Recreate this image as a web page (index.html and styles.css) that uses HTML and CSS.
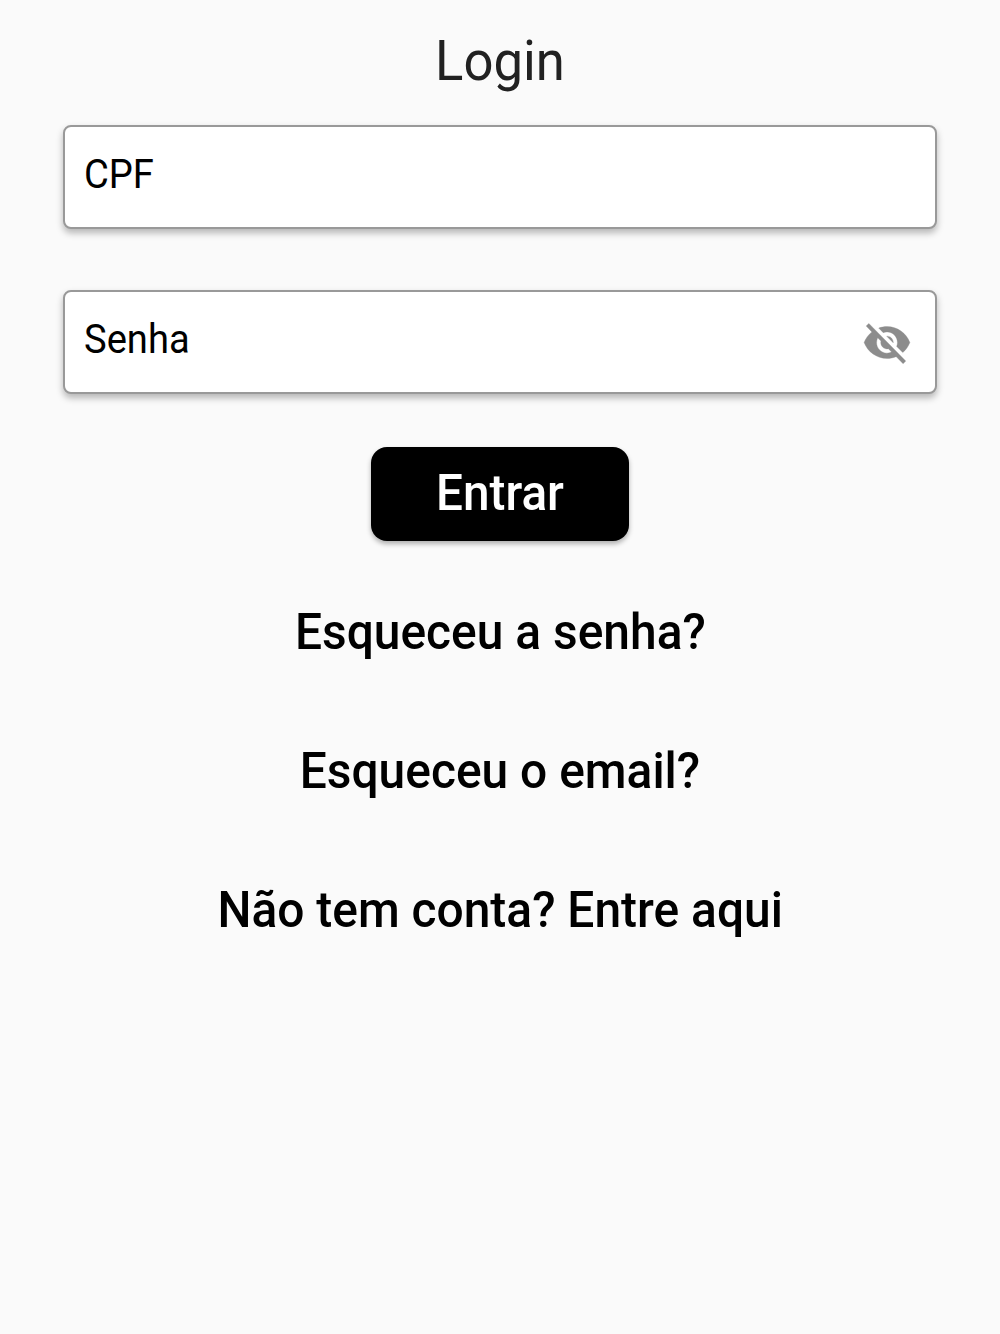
FILE: index.html
```html
<!DOCTYPE html>
<html lang="pt-BR">
<head>
    <meta charset="UTF-8">
    <meta name="viewport" content="width=device-width, initial-scale=1.0">
    <title>Login</title>
    <link rel="stylesheet" href="styles.css">
</head>
<body>
    <main class="container">
        <h1>Login</h1>
        <form class="login-form">
            <div class="field">
                <label for="cpf"><span class="label-text">CPF</span></label>
                <input type="text" id="cpf" name="cpf">
            </div>
            <div class="field">
                <label for="senha"><span class="label-text">Senha</span></label>
                <input type="password" id="senha" name="senha">
                <svg class="eye-icon" viewBox="0 0 24 24" preserveAspectRatio="none">
                    <path d="M12 7c2.76 0 5 2.24 5 5 0 .65-.13 1.26-.36 1.83l2.92 2.92c1.51-1.26 2.7-2.89 3.43-4.75-1.73-4.39-6-7.5-11-7.5-1.4 0-2.74.25-3.98.7l2.16 2.16C10.74 7.13 11.35 7 12 7zM2 4.27l2.28 2.28.46.46C3.08 8.3 1.78 10.02 1 12c1.73 4.39 6 7.5 11 7.5 1.55 0 3.03-.3 4.38-.84l.42.42L19.73 22 21 20.73 3.27 3 2 4.27zM7.53 9.8l1.55 1.55c-.05.21-.08.43-.08.65 0 1.66 1.34 3 3 3 .22 0 .44-.03.65-.08l1.55 1.55c-.67.33-1.41.53-2.2.53-2.76 0-5-2.24-5-5 0-.79.2-1.53.53-2.2zm4.31-.78l3.15 3.15.02-.16c0-1.66-1.34-3-3-3l-.17.01z"/>
                </svg>
            </div>
            <button type="submit"><span class="label-text">Entrar</span></button>
        </form>
        <nav class="links">
            <a href="#">Esqueceu a senha?</a>
            <a href="#">Esqueceu o email?</a>
            <a href="#">Não tem conta? Entre aqui</a>
        </nav>
    </main>
</body>
</html>
```
FILE: styles.css
```css
* {
    box-sizing: border-box;
}

body {
    font-family: Roboto, sans-serif;
    background-color: #fafafa;
    color: #000;
    margin: 0;
    padding: 0;
}

.container {
    min-height: 100vh;
    padding: 29px 63px 0;
}

h1 {
    margin: 0 0 32px;
    color: #212121;
    font-size: 55px;
    font-weight: 400;
    line-height: 64px;
    text-align: center;
    transform: scaleX(0.957);
}

.field {
    display: flex;
    align-items: center;
    height: 104px;
    margin-bottom: 61px;
    padding: 0 23px 0 19px;
    background-color: #fff;
    border: 2px solid #999;
    border-radius: 8px;
    box-shadow: 0 4px 7px rgba(0, 0, 0, 0.28);
}

label {
    font-size: 40px;
    line-height: 48px;
    padding-bottom: 4px;
}

.label-text {
    display: inline-block;
    transform: scaleX(0.953);
    transform-origin: left;
}

input {
    flex: 1;
    min-width: 0;
    border: none;
    outline: none;
    background: transparent;
    font: inherit;
    font-size: 40px;
}

.eye-icon {
    width: 50px;
    height: 51px;
    fill: #8c8c8c;
    stroke: #8c8c8c;
    stroke-width: 0.15;
}

button {
    display: block;
    width: 258px;
    height: 94px;
    margin: -8px auto 0;
    padding: 0;
    border: none;
    border-radius: 16px;
    background-color: #000;
    color: #fff;
    font: 500 50px/92px Roboto, sans-serif;
    box-shadow: 0 3px 5px rgba(0, 0, 0, 0.3);
    cursor: pointer;
}

button .label-text {
    display: block;
    height: 94px;
    transform-origin: center;
}

.links {
    display: flex;
    flex-direction: column;
    align-items: center;
    gap: 79px;
    margin-top: 61px;
}

.links a {
    color: #000;
    font-size: 50px;
    font-weight: 500;
    line-height: 60px;
    text-decoration: none;
    transform: scaleX(0.958);
}
```
